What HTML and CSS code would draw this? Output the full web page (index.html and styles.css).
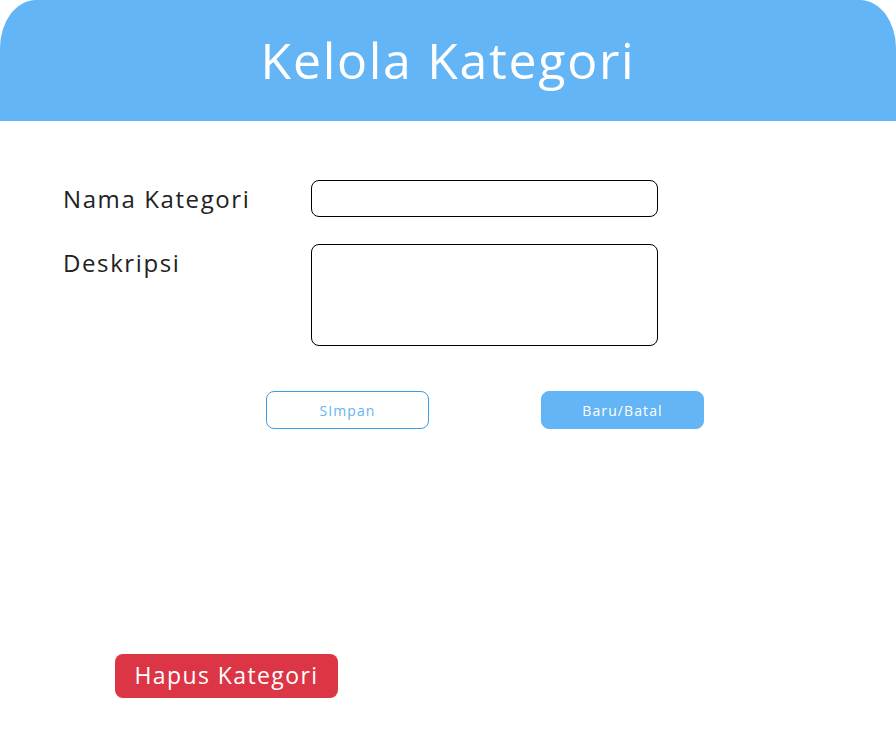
FILE: index.html
```html
<!DOCTYPE html>
<html lang="id">
<head>
<meta charset="utf-8">
<title>Kelola Kategori</title>
<link rel="stylesheet" href="styles.css">
</head>
<body>
<div class="page">
  <header class="header">
    <h1 class="title">Kelola Kategori</h1>
  </header>
  <main class="content">
    <form class="form">
      <label class="label label-center" for="nama">Nama Kategori</label>
      <input class="input" id="nama" type="text">
      <label class="label" for="desk">Deskripsi</label>
      <textarea class="textarea" id="desk"></textarea>
    </form>
    <div class="actions">
      <button class="btn btn-outline" type="button">SImpan</button>
      <button class="btn btn-fill" type="button">Baru/Batal</button>
    </div>
    <div class="danger-row">
      <button class="btn-danger" type="button">Hapus Kategori</button>
    </div>
  </main>
</div>
</body>
</html>
```

FILE: styles.css
```css
* { box-sizing: border-box; }
html, body { margin: 0; padding: 0; background: #fff; }
body { font-family: "Open Sans", "DejaVu Sans", sans-serif; }
.page { width: 896px; height: 746px; overflow: hidden; }
.header {
  height: 121px;
  background: #64b5f6;
  border-radius: 36px 36px 0 0 / 48px 48px 0 0;
  display: flex;
  align-items: center;
  justify-content: center;
}
.title {
  margin: 0;
  color: #fff;
  font-weight: 400;
  font-size: 50px;
  letter-spacing: 1.7px;
  line-height: 1;
  padding-bottom: 2px;
}
.content { padding: 59px 0 0 63px; }
.form {
  display: grid;
  grid-template-columns: 248px 347px;
  row-gap: 27px;
}
.label {
  font-size: 24px;
  letter-spacing: 1.6px;
  color: #222;
  line-height: 30px;
  padding-top: 4px;
}
.label-center { display: flex; align-items: center; padding-top: 0; }
.input, .textarea {
  border: 1px solid #000;
  border-radius: 8px;
  background: #fff;
  font: inherit;
  margin: 0;
  outline: none;
}
.input { height: 37px; }
.textarea { height: 102px; resize: none; }
.actions {
  display: flex;
  gap: 112px;
  margin-top: 45px;
  padding-left: 203px;
}
.btn {
  width: 163px;
  height: 38px;
  border-radius: 8px;
  font-family: inherit;
  font-size: 14px;
  letter-spacing: 1.1px;
  cursor: pointer;
}
.btn-outline { background: #fff; border: 1px solid #3a9de6; color: #64b5f6; }
.btn-fill { background: #64b5f6; border: 1px solid #64b5f6; color: #fff; }
.danger-row { margin-top: 225px; padding-left: 52px; }
.btn-danger {
  width: 223px;
  height: 44px;
  background: #dc3545;
  border: none;
  border-radius: 8px;
  color: #fff;
  font-family: inherit;
  font-size: 23px;
  letter-spacing: 1.4px;
  padding: 0 0 2px 0;
}
```
